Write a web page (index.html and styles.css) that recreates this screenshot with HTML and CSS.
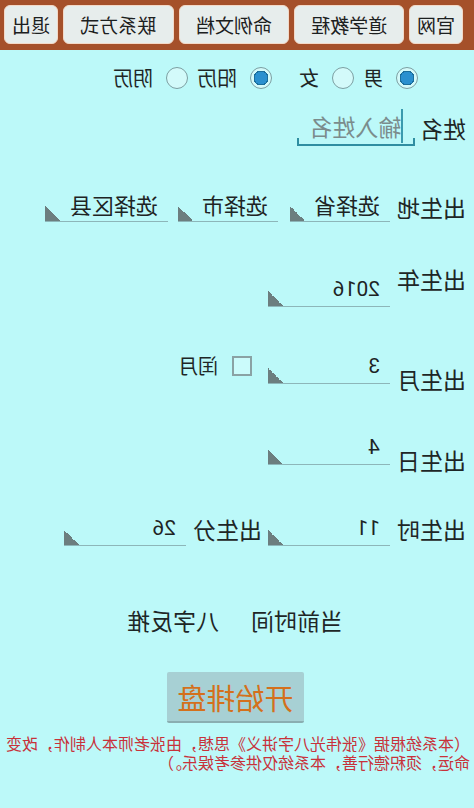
FILE: index.html
```html
<!DOCTYPE html>
<html lang="zh-CN">
<head>
<meta charset="utf-8">
<title>八字排盘</title>
<link rel="stylesheet" href="styles.css">
</head>
<body>
<div class="page">
  <header class="topbar">
    <div class="nav-btn nav-sm">官网</div>
    <div class="nav-btn nav-md">道学教程</div>
    <div class="nav-btn nav-lg">命例文档</div>
    <div class="nav-btn nav-lg">联系方式</div>
    <div class="nav-btn nav-sm">退出</div>
  </header>

  <div class="radio-row">
    <div class="radio-group">
      <div class="opt"><span class="radio checked"></span><span class="opt-text">男</span></div>
      <div class="opt"><span class="radio"></span><span class="opt-text">女</span></div>
    </div>
    <div class="radio-group">
      <div class="opt"><span class="radio checked"></span><span class="opt-text">阳历</span></div>
      <div class="opt"><span class="radio"></span><span class="opt-text">阴历</span></div>
    </div>
  </div>

  <div class="row name-row">
    <div class="label label-name">姓名</div>
    <div class="name-input"><span class="cursor"></span><span class="placeholder">输入姓名</span></div>
  </div>

  <div class="row place-row">
    <div class="label label-place">出生地</div>
    <div class="spinner sp-prov"><span class="sp-text cjk">选择省</span></div>
    <div class="spinner sp-city"><span class="sp-text cjk">选择市</span></div>
    <div class="spinner sp-county"><span class="sp-text cjk">选择区县</span></div>
  </div>

  <div class="row year-row">
    <div class="label">出生年</div>
    <div class="spinner sp-num sp-year"><span class="sp-text">2016</span></div>
  </div>

  <div class="row month-row">
    <div class="label label-low">出生月</div>
    <div class="spinner sp-num"><span class="sp-text">3</span></div>
    <div class="leap">
      <span class="checkbox"></span>
      <span class="leap-text">闰月</span>
    </div>
  </div>

  <div class="row day-row">
    <div class="label label-low">出生日</div>
    <div class="spinner sp-num"><span class="sp-text">4</span></div>
  </div>

  <div class="row hour-row">
    <div class="label label-hour">出生时</div>
    <div class="spinner sp-num"><span class="sp-text">11</span></div>
    <div class="label label-hour label-minute">出生分</div>
    <div class="spinner sp-num sp-minute"><span class="sp-text">26</span></div>
  </div>

  <div class="now-row">
    <div class="text-btn">当前时间</div>
    <div class="text-btn">八字反推</div>
  </div>

  <div class="start-btn">开始排盘</div>

  <p class="disclaimer">（本系统根据《张伟光八字讲义》思想，由张老师本人制作，改变命运，须积德行善，本系统仅供参考娱乐。）</p>
</div>
</body>
</html>
```

FILE: styles.css
```css
html, body {
  margin: 0;
  padding: 0;
  background: #bcf9f9;
}

.page {
  width: 474px;
  height: 808px;
  overflow: hidden;
  background: #bcf9f9;
  transform: scaleX(-1);
  font-family: "Noto Sans CJK SC", "Noto Sans", sans-serif;
  color: #1e2626;
}

/* top navigation bar */
.topbar {
  height: 50px;
  box-sizing: border-box;
  background: #a5502a;
  display: flex;
  align-items: flex-start;
  gap: 5px;
  padding: 5px 4px 0 11px;
}

.nav-btn {
  height: 39px;
  box-sizing: border-box;
  background: #e7edec;
  border: 1px solid #f3d9c8;
  border-radius: 6px;
  display: flex;
  align-items: center;
  justify-content: center;
  font-size: 19px;
  color: #1c2020;
}

.nav-sm { width: 54px; }
.nav-md { width: 110px; }
.nav-lg { width: 111px; }

/* radio row */
.radio-row {
  margin-top: 14px;
  height: 28px;
  display: flex;
  align-items: center;
  padding-left: 56px;
  gap: 27px;
}

.radio-group {
  display: flex;
  align-items: center;
  gap: 9px;
}

.opt {
  display: flex;
  align-items: center;
  gap: 13px;
}

.opt-text {
  font-size: 20px;
  line-height: 28px;
}

.radio {
  width: 22px;
  height: 22px;
  box-sizing: border-box;
  border-radius: 50%;
  border: 1.5px solid #7d9fa2;
  background: #d3fafa;
}

.radio.checked {
  background: radial-gradient(circle, #2a90cf 0 6.5px, #1b6e9c 6.5px 7.5px, #d3fafa 7.5px);
}

/* generic form rows */
.row {
  display: flex;
  align-items: flex-start;
}

.label {
  font-size: 23px;
  line-height: 30px;
  width: 69px;
  margin-left: 8px;
  white-space: nowrap;
}

/* name */
.name-row {
  margin-top: 15px;
}

.label-name {
  width: 46px;
  margin-top: 6px;
}

.name-input {
  margin-left: 5px;
  width: 118px;
  height: 39px;
  box-sizing: border-box;
  border-bottom: 2px solid #2f8ea2;
  background:
    linear-gradient(#2f8ea2, #2f8ea2) left bottom / 2px 6px no-repeat,
    linear-gradient(#2f8ea2, #2f8ea2) right bottom / 2px 6px no-repeat;
  display: flex;
  align-items: center;
  padding-left: 12px;
}

.cursor {
  width: 1.5px;
  height: 34px;
  background: #3a9aae;
}

.placeholder {
  font-size: 23px;
  color: #7b8c8c;
}

/* spinners */
.spinner {
  height: 36px;
  box-sizing: border-box;
  border-bottom: 1px solid #8db6b9;
  display: flex;
  align-items: center;
  padding-left: 10px;
  margin-left: 7px;
  background: linear-gradient(to bottom right, transparent 50%, #6c7e7f 50%) right bottom / 15px 15px no-repeat;
}

.sp-text {
  font-family: Roboto, "Noto Sans CJK SC", sans-serif;
  font-size: 21px;
  color: #1e2424;
}

.sp-text.cjk {
  font-family: "Noto Sans CJK SC", sans-serif;
  font-size: 22px;
}

.sp-prov { width: 100px; }
.sp-city { width: 100px; margin-left: 12px; }
.sp-county { width: 123px; margin-left: 10px; }
.sp-num { width: 122px; }

.place-row {
  margin-top: 40px;
}

.label-place {
  margin-top: 6px;
}

.year-row {
  margin-top: 42px;
}

.sp-year {
  margin-top: 7px;
}

.month-row {
  margin-top: 41px;
}

.label-low {
  margin-top: 16px;
}

.leap {
  height: 35px;
  display: flex;
  align-items: center;
  margin-left: 16px;
}

.checkbox {
  width: 20px;
  height: 20px;
  box-sizing: border-box;
  border: 2px solid #8aa2a4;
  background: #cbfbfb;
}

.leap-text {
  margin-left: 14px;
  font-size: 20px;
}

.day-row {
  margin-top: 35px;
}

.hour-row {
  margin-top: 35px;
}

.label-hour {
  margin-top: 4px;
}

.label-minute {
  margin-left: 6px;
}

/* bottom actions */
.now-row {
  margin-top: 59px;
  display: flex;
  padding-left: 131px;
  gap: 32px;
}

.text-btn {
  font-size: 23px;
  line-height: 30px;
  color: #1e2626;
}

.start-btn {
  margin-top: 37px;
  margin-left: 170px;
  width: 137px;
  height: 51px;
  box-sizing: border-box;
  background: #a7d0d4;
  border-bottom: 2px solid #8aaeb1;
  border-radius: 2px;
  display: flex;
  align-items: center;
  justify-content: center;
  font-size: 29px;
  color: #d4701c;
}

.disclaimer {
  margin: 11px 0 0;
  padding: 0 4px;
  font-size: 16px;
  line-height: 19px;
  color: #c8323a;
}
```
